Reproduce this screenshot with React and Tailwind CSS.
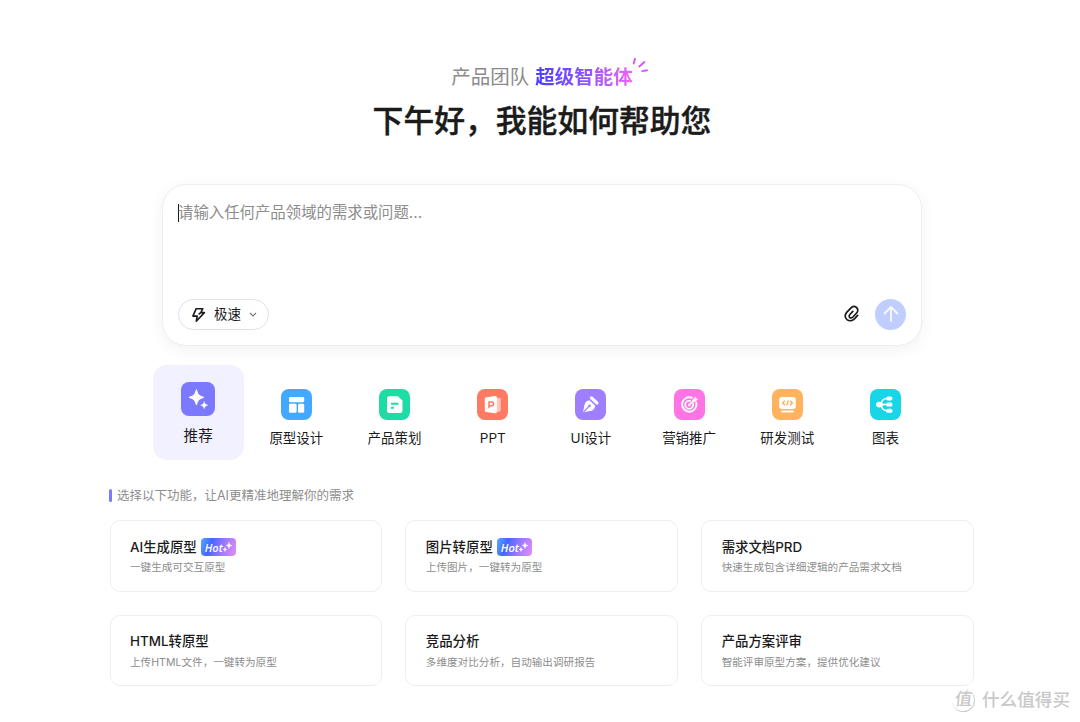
import { useState } from "react";

const Sparkles = () => (
  <svg viewBox="0 0 34 34" className="size-[34px]">
    <path
      d="M15.400 7.900c1 4.600 2.300 6.200 7 7.400-4.700 1.300-6 2.800-7 7.200-1-4.400-2.300-5.900-7-7.200 4.700-1.200 6-2.800 7-7.400Z"
      fill="#fff"
      stroke="#fff"
      strokeWidth="1.200"
      strokeLinejoin="round"
    />
    <path
      d="M23.200 19.600c.5 2.300 1.200 2.900 3.500 3.600-2.300.7-3 1.400-3.500 3.600-.5-2.200-1.200-2.900-3.500-3.600 2.300-.7 3-1.300 3.500-3.600Z"
      fill="#fff"
      stroke="#fff"
      strokeWidth=".5"
    />
  </svg>
);

const LayoutIcon = () => (
  <svg viewBox="0 0 31 31" className="size-[31px]" fill="#fff">
    <rect x="8" y="8" width="15.200" height="5.200" rx="1.300" />
    <rect x="8" y="14.800" width="7.600" height="9" rx="1.300" />
    <rect x="17.100" y="14.800" width="6.100" height="9" rx="1.300" />
  </svg>
);

const DocIcon = () => (
  <svg viewBox="0 0 31 31" className="size-[31px]">
    <path d="M10.200 7.200h8.600l4.700 4.300v10.300a2.200 2.200 0 0 1-2.200 2.200H10.200A2.200 2.200 0 0 1 8 21.800V9.400a2.200 2.200 0 0 1 2.200-2.200Z" fill="#fff" />
    <path d="M12 14.700h7.500M12 18.700h3" stroke="#1edda4" strokeWidth="1.900" />
  </svg>
);

const PptIcon = () => (
  <svg viewBox="0 0 31 31" className="size-[31px]">
    <rect x="15" y="8.700" width="8.700" height="14" rx="1.600" fill="#ffc9bf" />
    <path d="m9.200 8.300 9-1.300c1-.1 1.600.4 1.600 1.300v14.800c0 .9-.6 1.400-1.600 1.200l-9-1.300c-.9-.1-1.400-.7-1.400-1.500V9.800c0-.8.5-1.400 1.400-1.500Z" fill="#fff" />
    <path d="M12 19.200v-6.300h2.700a1.900 1.900 0 0 1 0 3.800H12" fill="none" stroke="#ff7a62" strokeWidth="1.500" />
  </svg>
);

const PenIcon = () => (
  <svg viewBox="0 0 31 31" className="size-[31px]">
    <path d="m16.500 8.900 5.400 5" stroke="#fff" strokeWidth="3.300" strokeLinecap="round" />
    <path d="m14.800 11.200 5.400 5.300c-.3 3.300-2.100 5-4.600 5.500l-6 1.100c-.9.100-1.400-.4-1.300-1.300l1.200-6c.5-2.500 2-4.200 5.300-4.600Z" fill="#fff" />
    <path d="m14.200 10.600 6.400 6.200" stroke="#9f7fff" strokeWidth=".7" />
    <path d="m9 22.500 5-5.200" stroke="#9f7fff" strokeWidth="1.200" />
    <circle cx="14.600" cy="16.900" r="1.300" fill="#9f7fff" />
  </svg>
);

const TargetIcon = () => (
  <svg viewBox="0 0 31 31" className="size-[31px]" fill="none" stroke="#fff" strokeLinecap="round">
    <path d="M17.800 8.700a7.200 7.200 0 1 0 4.500 5" strokeWidth="2" />
    <path d="M16.300 11.900a4 4 0 1 0 2.800 3" strokeWidth="1.700" />
    <circle cx="15.300" cy="15.900" r="1.300" fill="#fff" stroke="none" />
    <path d="m15.400 15.700 4.600-4.300" strokeWidth="1.500" />
    <path d="m18.900 10.700 2.600-2.600.4 1.700 1.700.4-2.600 2.500-2.100.2Z" fill="#fff" strokeWidth=".6" />
  </svg>
);

const CodeIcon = () => (
  <svg viewBox="0 0 31 31" className="size-[31px]">
    <rect x="7.200" y="7.900" width="16.600" height="12" rx="2.600" fill="#fff" />
    <rect x="9.200" y="21.500" width="12.600" height="2" rx=".8" fill="#fff" />
    <path d="m12.900 11.800-2.200 2.100 2.200 2.200M18.200 11.800l2.200 2.100-2.200 2.200M16.300 11.600l-1.500 4.600" fill="none" stroke="#ffb35c" strokeWidth="1.500" />
  </svg>
);

const ChartIcon = () => (
  <svg viewBox="0 0 31 31" className="size-[31px]">
    <path d="M17 9.400c-4 0-5 2.600-6.500 6.200 1.500 3.600 2.500 6.200 6.500 6.200M9 15.600h8" fill="none" stroke="#fff" strokeWidth="1.500" />
    <ellipse cx="9.600" cy="15.600" rx="3.600" ry="2.900" fill="#fff" />
    <rect x="16.200" y="7.400" width="6.200" height="4" rx="1.600" fill="#fff" />
    <rect x="16.200" y="13.600" width="6.200" height="4" rx="1.600" fill="#fff" />
    <rect x="16.200" y="19.800" width="6.200" height="4" rx="1.600" fill="#fff" />
  </svg>
);

const tabs = [
  { name: "推荐", color: "bg-[#7b79ff]", Icon: Sparkles },
  { name: "原型设计", color: "bg-[#43a8ff]", Icon: LayoutIcon },
  { name: "产品策划", color: "bg-[#1edda4]", Icon: DocIcon },
  { name: "PPT", color: "bg-[#ff7a62]", Icon: PptIcon },
  { name: "UI设计", color: "bg-[#9f7fff]", Icon: PenIcon },
  { name: "营销推广", color: "bg-[#ff74e4]", Icon: TargetIcon },
  { name: "研发测试", color: "bg-[#ffb35c]", Icon: CodeIcon },
  { name: "图表", color: "bg-[#18d5e8]", Icon: ChartIcon },
];

const features = [
  { title: "AI生成原型", desc: "一键生成可交互原型", hot: true },
  { title: "图片转原型", desc: "上传图片，一键转为原型", hot: true },
  { title: "需求文档PRD", desc: "快速生成包含详细逻辑的产品需求文档" },
  { title: "HTML转原型", desc: "上传HTML文件，一键转为原型" },
  { title: "竞品分析", desc: "多维度对比分析，自动输出调研报告" },
  { title: "产品方案评审", desc: "智能评审原型方案，提供优化建议" },
];

const HotBadge = () => (
  <span className="ml-1 flex h-[18px] w-[35px] items-center rounded-[4px] bg-[linear-gradient(110deg,#5aa9ff_0%,#4268ff_28%,#a57bff_65%,#e68cf8_100%)] pl-1">
    <span className="font-['Open_Sans',sans-serif] text-[11px] leading-none font-semibold text-white italic">Hot</span>
    <svg viewBox="0 0 9 10" className="mb-px h-[10px] w-[9px]" fill="#fff">
      <path d="M6 .5C6.400 2.500 7 3.100 9 3.500 7 3.900 6.400 4.500 6 6.500 5.600 4.500 5 3.900 3 3.500 5 3.100 5.600 2.500 6 .5Z" stroke="#fff" strokeWidth=".5" />
      <path d="M2 5.500c.3 1.300.7 1.700 2 2-1.300.3-1.700.7-2 2-.3-1.300-.7-1.700-2-2 1.300-.3 1.700-.7 2-2Z" stroke="#fff" strokeWidth=".5" />
    </svg>
  </span>
);

const App = () => {
  const [active, setActive] = useState("推荐");

  return (
    <main className="relative h-[722px] w-[1080px] overflow-hidden bg-white pt-[65px] font-['Inter','Noto_Sans_CJK_SC',sans-serif] text-[#1b1b1b]">
      <header className="flex flex-col items-center pl-1">
        <div className="flex h-[26px] items-center text-[19.500px]">
          <span className="text-[#8b8b8b]">产品团队</span>
          <span className="relative ml-1.5">
            <span className="bg-linear-to-r from-[#4b3dff] via-[#8b50ff] to-[#f263f5] bg-clip-text font-bold text-transparent">超级智能体</span>
            <svg viewBox="0 0 17 17" className="absolute -top-1.5 -right-4 size-[17px]" fill="none" stroke="#d956fa" strokeWidth="1.900" strokeLinecap="round">
              <path d="M3 1.800 1.700 6.600M12.400 5 7.300 9.500M15 13.300l-4.800.8" />
            </svg>
          </span>
        </div>
        <h1 className="mt-[7px] text-[30.800px] leading-[46px] font-medium [-webkit-text-stroke:0.4px_#1b1b1b]">下午好，我能如何帮助您</h1>
      </header>

      <section className="mt-10 ml-[162px] flex h-[162px] w-[760px] flex-col justify-between rounded-[24px] border border-[#eeeeef] bg-white px-[15px] pt-[17px] pb-[15px] shadow-[0_4px_16px_rgba(0,0,0,0.055)]">
        <div className="flex h-[22px] items-center text-[15.400px] text-[#8d8d8d]">
          <span className="-mr-px h-[18px] w-px bg-[#1b1b1b]" />
          <span>请输入任何产品领域的需求或问题...</span>
        </div>
        <div className="flex items-center justify-between">
          <button className="flex h-[31px] w-[91px] items-center rounded-full border border-[#e0e0f0] pl-[12px] text-[13.500px]">
            <svg viewBox="0 0 15 16" className="h-4 w-[15px]" fill="none" stroke="#1b1b1b" strokeWidth="1.600" strokeLinejoin="round">
              <path d="M5.200 1.700h6.600L9.800 5.600h3.600L5.300 14.200l.9-5.100H1.900l3.300-7.400ZM9.800 5.600 7.600 7.300" />
            </svg>
            <span className="ml-2">极速</span>
            <svg viewBox="0 0 8 6" className="mt-px ml-2 h-[6px] w-[8px]" fill="none" stroke="#777" strokeWidth="1.100">
              <path d="m1 1 3 3 3-3" />
            </svg>
          </button>
          <div className="flex items-center gap-4">
            <svg viewBox="0 0 16 18" className="mb-px h-[18px] w-4" fill="none" stroke="#1b1b1b" strokeWidth="1.700" strokeLinecap="round">
              <path d="m14.600 10.400-2.900 3.200c-2.200 2.300-5.400 2.800-7.700 1-2.300-1.900-2.300-4.900-.3-7.200l3.800-4.100c1.800-1.900 4.300-2.200 6-.8 1.700 1.400 1.700 3.700.1 5.500l-3.700 4c-1 1-2.200 1.200-3.100.5-.9-.8-.8-2 .1-3l2.900-3.100" />
            </svg>
            <button className="flex size-[31px] items-center justify-center rounded-full bg-[#c0ceff]">
              <svg viewBox="0 0 16 18" className="mb-px h-[18px] w-4" fill="none" stroke="#f6f6f6" strokeWidth="1.900" strokeLinecap="round" strokeLinejoin="round">
                <path d="M8 16V2M1.500 8.500 8 2l6.500 6.500" />
              </svg>
            </button>
          </div>
        </div>
      </section>

      <nav className="mt-[18.500px] ml-[152.700px] flex gap-[7.200px]">
        {tabs.map(({ name, color, Icon }) => (
          <button
            key={name}
            onClick={() => setActive(name)}
            className={`flex h-[95.500px] w-[91px] flex-col items-center rounded-[14px] ${
              active === name ? "bg-[#f2f1ff] pt-[17px] text-[14.600px]" : "pt-6 text-[13.500px]"
            }`}
          >
            <span className={`flex items-center justify-center overflow-hidden rounded-[8px] ${color}`}>
              <Icon />
            </span>
            <span className={active === name ? "mt-[9px] leading-[22px]" : "mt-[7px] leading-[22px]"}>{name}</span>
          </button>
        ))}
      </nav>

      <section className="mt-[27px] ml-[109.500px] w-[864.500px]">
        <div className="flex h-[18px] items-center text-[12.500px] text-[#8d8d8d]">
          <span className="mr-[5px] -ml-[.5px] mb-px h-[13px] w-[3px] rounded-full bg-[#7b79ff]" />
          选择以下功能，让AI更精准地理解你的需求
        </div>
        <div className="mt-[15px] grid grid-cols-3 gap-[23px]">
          {features.map(({ title, desc, hot }) => (
            <article key={title} className="h-[71.500px] rounded-[10px] border border-[#efefef] pt-4 pl-[19.500px]">
              <h2 className="flex h-5 items-center text-[13.400px] font-medium">
                {title}
                {hot && <HotBadge />}
              </h2>
              <p className="mt-0.5 text-[10.600px] leading-[18px] text-[#8d8d8d]">{desc}</p>
            </article>
          ))}
        </div>
      </section>

      <div className="absolute top-[688px] left-[952px] flex items-center gap-[7px] text-[#c8c8c8] [text-shadow:-1px_-1px_0_#fff]">
        <span className="flex size-[23px] items-center justify-center rounded-full border-r border-b border-[#cdcdcd] text-[17px] leading-none font-medium">
          <span className="-skew-x-6">值</span>
        </span>
        <span className="text-[17.600px] leading-6 font-medium">什么值得买</span>
      </div>
    </main>
  );
};

export default App;
